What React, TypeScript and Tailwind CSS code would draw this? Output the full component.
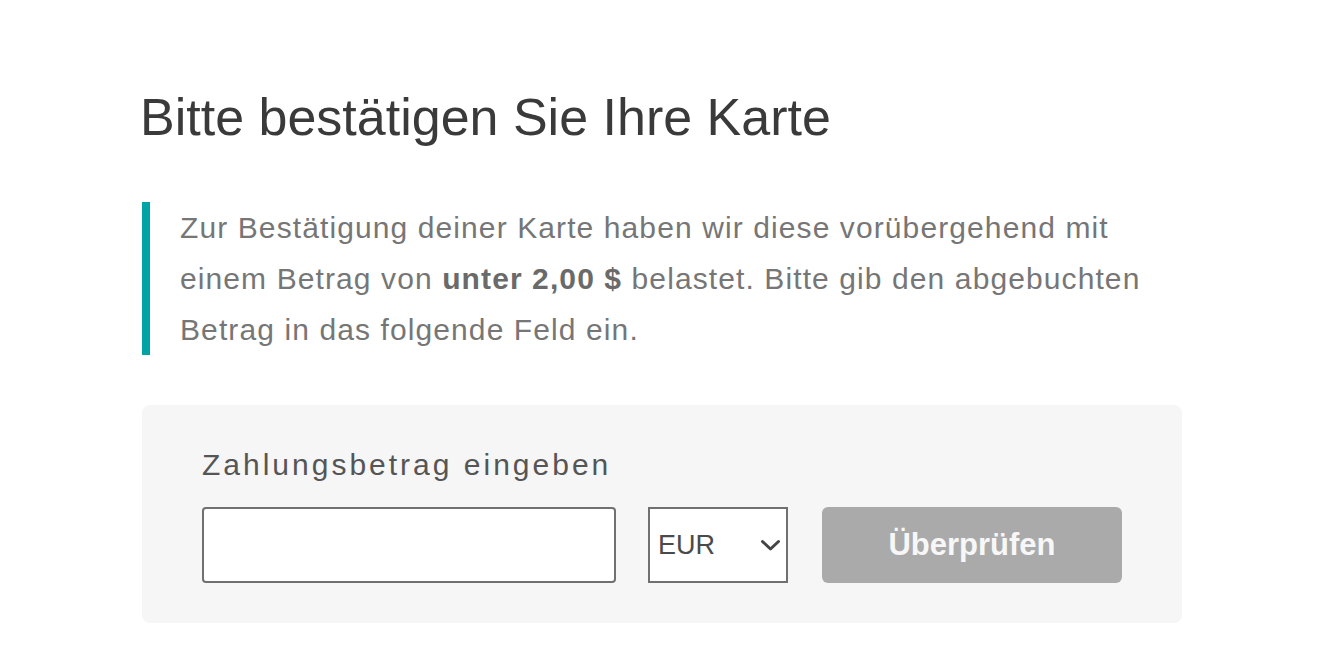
export default function App() {
  return (
    <div
      className="min-h-screen w-full bg-white"
      style={{ fontFamily: '"Liberation Sans", Arial, Helvetica, sans-serif' }}
    >
      <div className="mx-auto w-[1040px] pt-[87px]">
        {/* ── Heading ── */}
        <h1 className="-ml-[2px] text-[52px] leading-[60px] font-normal text-[#3a3a3a]">
          Bitte bestätigen Sie Ihre Karte
        </h1>

        {/* ── Notice with teal rule ── */}
        <div className="mt-[55px] border-l-[8px] border-[#00a3a6] pl-[30px]">
          <p className="text-[30px] leading-[51px] tracking-[1.1px] text-[#767676]">
            Zur Bestätigung deiner Karte haben wir diese vorübergehend mit einem Betrag von{" "}
            <strong className="font-bold text-[#6a6a6a]">unter 2,00 $</strong> belastet. Bitte gib den
            abgebuchten Betrag in das folgende Feld ein.
          </p>
        </div>

        {/* ── Amount form ── */}
        <div className="mt-[50px] rounded-[8px] bg-[#f6f6f6] px-[60px] pt-[42px] pb-[40px]">
          <label
            htmlFor="amount"
            className="block text-[30px] leading-[36px] tracking-[3px] text-[#555555]"
          >
            Zahlungsbetrag eingeben
          </label>

          <div className="mt-[24px] flex items-center">
            <input
              id="amount"
              type="text"
              className="h-[76px] w-[414px] rounded-[4px] border-2 border-[#707070] bg-white px-3 text-[27px] text-[#444] outline-none"
            />

            <div className="relative ml-[32px] h-[76px] w-[140px]">
              <select
                defaultValue="EUR"
                className="h-full w-full appearance-none rounded-none border-2 border-[#707070] bg-white pl-[8px] text-[27px] text-[#4a4a4a] outline-none"
              >
                <option value="EUR">EUR</option>
                <option value="USD">USD</option>
              </select>
              {/* Chevron */}
              <svg
                className="pointer-events-none absolute right-[7px] top-[32px]"
                width="21"
                height="13"
                viewBox="0 0 21 13"
                fill="none"
              >
                <path
                  d="M2.5 2.5 L10.5 10 L18.5 2.5"
                  stroke="#444444"
                  strokeWidth="3"
                  strokeLinecap="round"
                  strokeLinejoin="round"
                />
              </svg>
            </div>

            <button
              type="button"
              disabled
              className="ml-[34px] h-[76px] w-[300px] rounded-[6px] bg-[#aaaaaa] text-[31px] font-bold text-[#f7f7f7]"
            >
              Überprüfen
            </button>
          </div>
        </div>
      </div>
    </div>
  );
}
